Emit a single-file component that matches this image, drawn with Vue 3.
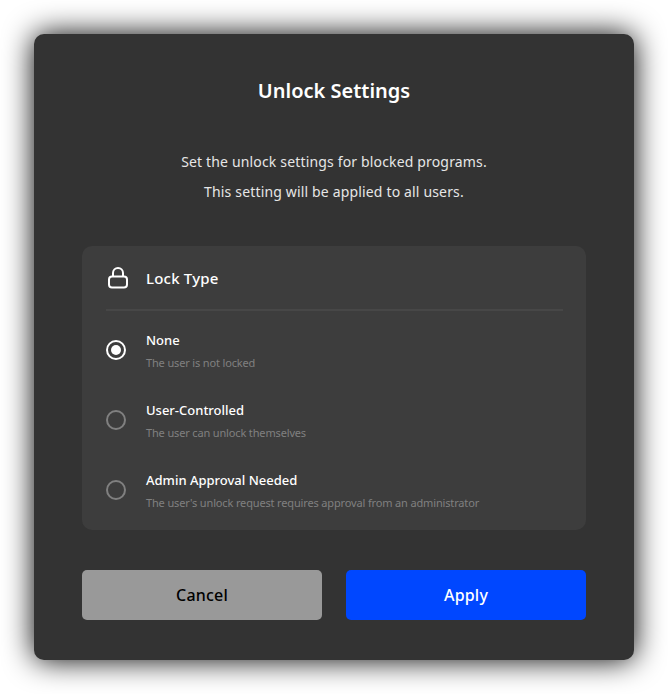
<template>
  <div class="page">
    <div class="dialog">
      <h1 class="title">Unlock Settings</h1>
      <div class="desc">
        <p>Set the unlock settings for blocked programs.</p>
        <p>This setting will be applied to all users.</p>
      </div>

      <div class="panel">
        <div class="panel-head">
          <svg class="lock" width="24" height="24" viewBox="0 0 24 24" fill="none">
            <rect x="3" y="10.5" width="18" height="11" rx="3" stroke="#fff" stroke-width="2" />
            <path d="M7 10.5V7a5 5 0 0 1 10 0v3.5" stroke="#fff" stroke-width="2" />
          </svg>
          <span class="panel-title">Lock Type</span>
        </div>
        <div class="options">
          <div v-for="opt in options" :key="opt.value" class="option" @click="selected = opt.value">
            <span class="radio" :class="{ checked: selected === opt.value }"></span>
            <div class="option-text">
              <div class="option-name">{{ opt.name }}</div>
              <div class="option-sub">{{ opt.sub }}</div>
            </div>
          </div>
        </div>
      </div>

      <div class="actions">
        <button class="btn cancel">Cancel</button>
        <button class="btn apply">Apply</button>
      </div>
    </div>
  </div>
</template>

<script setup>
import { ref } from 'vue'

const selected = ref('none')

const options = [
  { value: 'none', name: 'None', sub: 'The user is not locked' },
  { value: 'user', name: 'User-Controlled', sub: 'The user can unlock themselves' },
  { value: 'admin', name: 'Admin Approval Needed', sub: "The user's unlock request requires approval from an administrator" },
]
</script>

<style>
html,
body {
  margin: 0;
  background: #fff;
}
</style>

<style scoped>
.page {
  width: 668px;
  height: 694px;
  padding: 34px;
  box-sizing: border-box;
  overflow: hidden;
  font-family: "Noto Sans", "Noto Sans CJK KR", sans-serif;
}

.dialog {
  width: 600px;
  height: 626px;
  box-sizing: border-box;
  padding: 40px 48px;
  background: #333;
  border-radius: 10px;
  box-shadow: 0 0 30px #000;
  display: flex;
  flex-direction: column;
}

.title {
  margin: 0;
  font-size: 20px;
  line-height: 33px;
  font-weight: 600;
  color: #fff;
  text-align: center;
}

.desc {
  margin-top: 40px;
  text-align: center;
  font-size: 14px;
  line-height: 30px;
  letter-spacing: 0.16px;
  color: #e6e6e6;
}

.desc p {
  margin: 0;
}

.panel {
  margin-top: 39px;
  height: 284px;
  box-sizing: border-box;
  padding: 0 23px 0 24px;
  background: #3d3d3d;
  border-radius: 10px;
}

.panel-head {
  height: 65px;
  box-sizing: border-box;
  padding-top: 1px;
  display: flex;
  align-items: center;
  border-bottom: 2px solid #474747;
}

.lock {
  flex: none;
}

.panel-title {
  margin-left: 16px;
  font-size: 15px;
  font-weight: 500;
  letter-spacing: 0.2px;
  color: #fff;
}

.options {
  padding-top: 14px;
  display: flex;
  flex-direction: column;
  gap: 20px;
}

.option {
  display: flex;
  align-items: center;
  height: 50px;
  cursor: pointer;
}

.radio {
  flex: none;
  width: 20px;
  height: 20px;
  box-sizing: border-box;
  border: 2px solid #808080;
  border-radius: 50%;
  position: relative;
}

.radio.checked {
  border-color: #fff;
}

.radio.checked::after {
  content: "";
  position: absolute;
  left: 3px;
  top: 3px;
  width: 10px;
  height: 10px;
  border-radius: 50%;
  background: #fff;
}

.option-text {
  margin-left: 20px;
  padding-top: 3px;
}

.option-name {
  font-size: 13px;
  line-height: 20px;
  font-weight: 500;
  color: #fff;
}

.option-sub {
  margin-top: 3px;
  font-size: 11px;
  line-height: 20px;
  letter-spacing: -0.15px;
  color: #808080;
}

.actions {
  margin-top: 40px;
  display: flex;
  gap: 24px;
}

.btn {
  height: 50px;
  border: none;
  border-radius: 5px;
  font-family: inherit;
  font-size: 16px;
  font-weight: 500;
  letter-spacing: 0.2px;
  cursor: pointer;
}

.cancel {
  width: 240px;
  background: #999;
  color: #000;
}

.apply {
  width: 240px;
  background: #0047ff;
  color: #fff;
}
</style>
